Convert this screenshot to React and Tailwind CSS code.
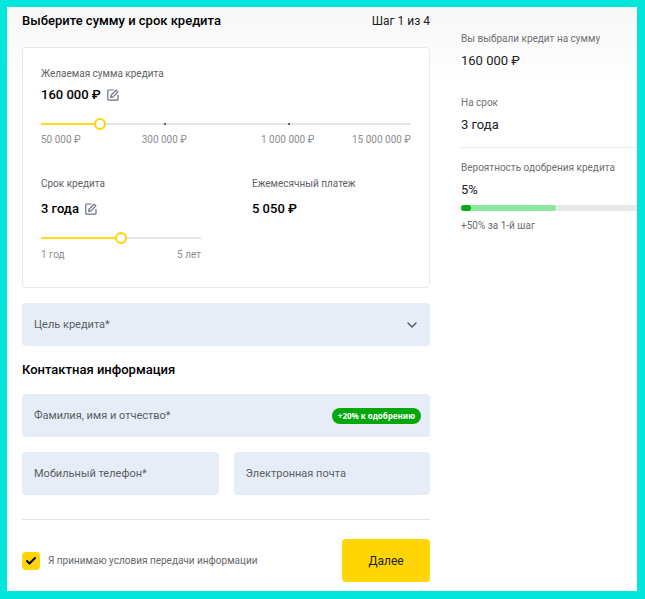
import { useState } from 'react';
import { Check, ChevronDown } from 'lucide-react';

// The amount scale is split into equal segments between these stops
const AMOUNT_STOPS = [50000, 300000, 1000000, 15000000];
const STOP_CLASSES = ['', 'col-span-2 text-center', 'col-span-2 text-center', 'text-right'];
const SEGMENT = 100;

const formatNumber = (value) => String(value).replace(/\B(?=(\d{3})+$)/g, '\u00a0');

const positionToAmount = (position) => {
    const index = Math.min(Math.floor(position / SEGMENT), AMOUNT_STOPS.length - 2);
    const share = (position - index * SEGMENT) / SEGMENT;
    const from = AMOUNT_STOPS[index];
    const to = AMOUNT_STOPS[index + 1];
    return Math.round(from + (to - from) * share);
};

const formatYears = (years) => {
    if (years === 1) return '1 год';
    return years < 5 ? `${years} года` : `${years} лет`;
};

const EditIcon = () => (
    <svg viewBox="0 0 12 12" className="w-3 h-3" fill="none" stroke="currentColor" strokeWidth="1.2">
        <path d="M6.5 1H1.6A0.8 0.8 0 0 0 0.8 1.8V10.4A0.8 0.8 0 0 0 1.6 11.2H10.2A0.8 0.8 0 0 0 11 10.4V6" />
        <path d="M3.6 8.4L4.2 6L9.1 1.1L10.9 2.9L6 7.8Z" strokeLinejoin="round" />
    </svg>
);

const Slider = ({ id, min, max, value, onChange }) => {
    const filled = ((value - min) / (max - min)) * 100;

    return (
        <input
            id={id}
            type="range"
            min={min}
            max={max}
            value={value}
            onChange={(e) => onChange(Number(e.target.value))}
            className="block w-full h-3 appearance-none cursor-pointer bg-no-repeat bg-center bg-[length:100%_2px] [&::-webkit-slider-thumb]:appearance-none [&::-webkit-slider-thumb]:w-3 [&::-webkit-slider-thumb]:h-3 [&::-webkit-slider-thumb]:rounded-full [&::-webkit-slider-thumb]:border-2 [&::-webkit-slider-thumb]:border-[#fdd405] [&::-webkit-slider-thumb]:bg-white"
            style={{ backgroundImage: `linear-gradient(to right, #ffdb1f ${filled}%, #e6e6ea ${filled}%)` }}
        />
    );
};

const Field = ({ id, label, type = 'text', children }) => (
    <div className="flex items-center flex-1 min-w-0 h-[43px] pl-3 pr-[9px] gap-2 rounded-sm bg-[#e7edf6] text-[#5b5f64]">
        <label htmlFor={id} className="text-[11px] leading-4 whitespace-nowrap">{label}</label>
        <input id={id} type={type} className="flex-1 min-w-0 h-full text-[11px] text-gray-900 outline-none" />
        {children}
    </div>
);

const SummaryItem = ({ label, value }) => (
    <div>
        <dt className="text-[10px] leading-4 text-[#6f7073]">{label}</dt>
        <dd className="mt-1 text-[13px] leading-5 text-[#222]">{value}</dd>
    </div>
);

export const App = () => {
    const [position, setPosition] = useState(44);
    const [years, setYears] = useState(3);
    const [agreed, setAgreed] = useState(true);

    const amount = `${formatNumber(positionToAmount(position))} ₽`;

    return (
        <div className="min-h-screen border-[7px] border-r-8 border-b-8 border-[#00e6dc] bg-white bg-linear-to-b from-[#f7f7f7] to-white to-[80px] font-['Roboto','Liberation_Sans',sans-serif] text-black">
            <div className="flex gap-[31px] pl-[15px]">
                <form className="flex-1 min-w-0 pb-2" onSubmit={(e) => e.preventDefault()}>
                    <div className="flex items-center justify-between pt-1 pb-4">
                        <h1 className="text-[13px] leading-5 font-medium">Выберите сумму и срок кредита</h1>
                        <span className="text-xs text-[#222]">Шаг 1 из 4</span>
                    </div>

                    {/* Amount and term */}
                    <section className="px-[18px] pt-[18px] pb-6 rounded-sm border border-[#e8e8e8] bg-white">
                        <label htmlFor="amount" className="block text-[10px] leading-4 text-[#5f6166]">
                            Желаемая сумма кредита
                        </label>
                        <div className="flex items-center gap-1.5 mt-[3px]">
                            <span className="text-[13px] leading-5 font-medium">{amount}</span>
                            <button type="button" aria-label="Изменить сумму" className="text-[#6b7280]">
                                <EditIcon />
                            </button>
                        </div>
                        <div className="relative mt-[13px]">
                            <Slider id="amount" min={0} max={300} value={position} onChange={setPosition} />
                            <span className="absolute left-1/3 top-[5px] w-0.5 h-0.5 rounded-full bg-[#333]" />
                            <span className="absolute left-2/3 top-[5px] w-0.5 h-0.5 rounded-full bg-[#333]" />
                        </div>
                        <div className="grid grid-cols-6 mt-0.5 text-[10px] leading-4 text-[#8b8d91] whitespace-nowrap">
                            {AMOUNT_STOPS.map((stop, index) => (
                                <span key={stop} className={STOP_CLASSES[index]}>{formatNumber(stop)} ₽</span>
                            ))}
                        </div>

                        <div className="flex mt-7">
                            <div className="w-40">
                                <label htmlFor="term" className="block text-[10px] leading-4 text-[#5f6166]">
                                    Срок кредита
                                </label>
                                <div className="flex items-center gap-1.5 mt-[7px]">
                                    <span className="text-[13px] leading-5 font-medium">{formatYears(years)}</span>
                                    <button type="button" aria-label="Изменить срок" className="text-[#6b7280]">
                                        <EditIcon />
                                    </button>
                                </div>
                                <div className="mt-[13px]">
                                    <Slider id="term" min={1} max={5} value={years} onChange={setYears} />
                                </div>
                                <div className="flex justify-between mt-[3px] text-[10px] leading-4 text-[#8b8d91]">
                                    <span>1 год</span>
                                    <span>5 лет</span>
                                </div>
                            </div>
                            <div className="ml-[51px]">
                                <div className="text-[10px] leading-4 text-[#5f6166]">Ежемесячный платеж</div>
                                <div className="mt-[7px] text-[13px] leading-5 font-medium">5 050 ₽</div>
                            </div>
                        </div>
                    </section>

                    <div className="relative flex items-center h-[43px] mt-[15px] pl-3 gap-2 rounded-sm bg-[#e7edf6] text-[11px] text-[#5b5f64]">
                        <label htmlFor="purpose" className="leading-4 whitespace-nowrap">Цель кредита*</label>
                        <select id="purpose" defaultValue="" className="flex-1 min-w-0 h-full appearance-none text-gray-900 outline-none">
                            <option value=""></option>
                            <option value="repair">Ремонт</option>
                            <option value="car">Автомобиль</option>
                        </select>
                        <ChevronDown className="absolute right-2.5 top-3.5 w-4 h-4 text-[#505359] pointer-events-none" />
                    </div>

                    {/* Contacts */}
                    <h2 className="mt-3.5 text-[13px] leading-5 font-medium">Контактная информация</h2>
                    <div className="flex mt-3.5">
                        <Field id="name" label="Фамилия, имя и отчество*">
                            <span className="px-1.5 rounded-full bg-[#04a80c] font-['Noto_Sans',sans-serif] text-[8px] leading-4 font-bold text-white whitespace-nowrap">
                                +20% к одобрению
                            </span>
                        </Field>
                    </div>
                    <div className="flex gap-[15px] mt-[15px]">
                        <Field id="phone" type="tel" label="Мобильный телефон*" />
                        <Field id="email" type="email" label="Электронная почта" />
                    </div>

                    <div className="flex items-center justify-between mt-6 pt-[19px] border-t border-[#e4e4e6]">
                        <label className="flex items-center gap-2 text-[10px] leading-4 text-[#66686c]">
                            <span className="relative flex items-center justify-center">
                                <input
                                    type="checkbox"
                                    checked={agreed}
                                    onChange={(e) => setAgreed(e.target.checked)}
                                    className="w-[18px] h-[18px] appearance-none rounded-sm bg-gray-200 checked:bg-[#ffd505]"
                                />
                                {agreed && (
                                    <Check strokeWidth={4} className="absolute w-3 h-3 text-black pointer-events-none" />
                                )}
                            </span>
                            Я принимаю условия передачи информации
                        </label>
                        <button type="submit" className="w-[88px] h-[43px] rounded-sm bg-[#ffd505] text-xs text-[#222]">
                            Далее
                        </button>
                    </div>
                </form>

                {/* Summary */}
                <aside className="w-44 pt-6">
                    <dl className="pb-3 border-b border-[#e8e8e8] space-y-6">
                        <SummaryItem label="Вы выбрали кредит на сумму" value={amount} />
                        <SummaryItem label="На срок" value={formatYears(years)} />
                    </dl>
                    <dl className="mt-3">
                        <SummaryItem label="Вероятность одобрения кредита" value="5%" />
                    </dl>
                    <div className="mt-[5px] h-1.5 rounded-l-full bg-[#e6e8ea]">
                        <div className="w-[54%] h-full rounded-full bg-[#8de8a0]">
                            <div className="w-[10%] h-full rounded-full bg-[#0aa81c]" />
                        </div>
                    </div>
                    <p className="mt-[7px] text-[10px] leading-4 text-[#6b6d71]">+50% за 1-й шаг</p>
                </aside>
            </div>
        </div>
    );
};

export default App;
